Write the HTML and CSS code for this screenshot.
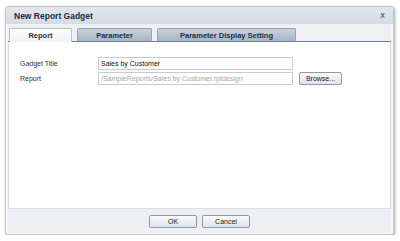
FILE: index.html
```html
<!DOCTYPE html>
<html>
<head>
<meta charset="utf-8">
<link rel="stylesheet" href="styles.css">
</head>
<body>
<div class="dialog">
  <div class="titlebar">
    <span class="title">New Report Gadget</span>
    <span class="close">x</span>
  </div>
  <div class="inner">
    <div class="tabs">
      <div class="tab active">Report</div>
      <div class="tab t2">Parameter</div>
      <div class="tab t3">Parameter Display Setting</div>
    </div>
    <div class="panel">
      <div class="row">
        <label class="lbl">Gadget Title</label>
        <div class="input">Sales by Customer</div>
      </div>
      <div class="row">
        <label class="lbl">Report</label>
        <div class="input disabled">/SampleReports/Sales by Customer.rptdesign</div>
        <div class="btn browse">Browse...</div>
      </div>
    </div>
    <div class="footer">
      <div class="btn fbtn">OK</div>
      <div class="btn fbtn">Cancel</div>
    </div>
  </div>
</div>
</body>
</html>
```
FILE: styles.css
```css
html, body {
  margin: 0;
  padding: 0;
  background: #ffffff;
  font-family: "Liberation Sans", Arial, sans-serif;
}
body {
  padding: 6px 0 0 5px;
}
.dialog {
  width: 387px;
  height: 227px;
  border: 1px solid #c4c6c9;
  border-radius: 3px;
  box-shadow: 1px 1px 3px rgba(0,0,0,0.35);
  background: #f7f7f8;
  display: flex;
  flex-direction: column;
  overflow: hidden;
}
.titlebar {
  height: 17px;
  flex: none;
  background: linear-gradient(#e2e7ed, #d4dbe4);
  display: flex;
  align-items: center;
  justify-content: space-between;
  padding: 0 8px 0 8px;
}
.title {
  font-weight: bold;
  font-size: 8.5px;
  color: #1d2a3d;
}
.close {
  font-size: 8px;
  color: #444;
  font-family: "DejaVu Sans", sans-serif;
}
.inner {
  flex: 1;
  display: flex;
  flex-direction: column;
  padding: 0 2px 1px 2px;
}
.tabs {
  flex: none;
  height: 17px;
  background: #eef0f3;
  border-bottom: 1px solid #6d819b;
  display: flex;
  align-items: flex-end;
  padding-left: 1px;
}
.tab {
  height: 12px;
  border: 1px solid #96a4b6;
  border-bottom: none;
  border-radius: 2px 2px 0 0;
  background: linear-gradient(#c9d2dd, #a8b5c5);
  font-size: 7.5px;
  font-weight: bold;
  color: #223047;
  display: flex;
  align-items: center;
  justify-content: center;
  margin-right: 5px;
}
.tab.active {
  background: linear-gradient(#ffffff, #eef0f2);
  border-color: #b7c0cb;
  height: 13px;
  margin-bottom: -1px;
  width: 61px;
}
.t2 { width: 73px; }
.t3 { width: 137px; }
.panel {
  flex: 1;
  background: #ffffff;
  border-left: 1px solid #d9dadc;
  border-right: 1px solid #d9dadc;
  padding-top: 15px;
  padding-left: 11px;
  display: flex;
  flex-direction: column;
  gap: 2px;
}
.row {
  display: flex;
  align-items: center;
  height: 13px;
}
.lbl {
  width: 78px;
  font-size: 7px;
  color: #333;
}
.input {
  width: 191px;
  height: 11px;
  border: 1px solid #c9cbcd;
  font-size: 7px;
  color: #111;
  line-height: 11px;
  padding-left: 2px;
  white-space: nowrap;
  overflow: hidden;
}
.input.disabled {
  color: #a8a8a8;
}
.btn {
  border: 1px solid #8c9aab;
  border-radius: 2px;
  background: linear-gradient(#fbfbfc, #dfe3e8);
  font-size: 7px;
  color: #222;
  display: flex;
  align-items: center;
  justify-content: center;
}
.browse {
  width: 41px;
  height: 11px;
  margin-left: 6px;
}
.footer {
  flex: none;
  height: 24px;
  background: #eeeff2;
  border-top: 1px solid #dcdde0;
  display: flex;
  justify-content: center;
  align-items: center;
  gap: 5px;
}
.fbtn {
  width: 46px;
  height: 11px;
}
```
